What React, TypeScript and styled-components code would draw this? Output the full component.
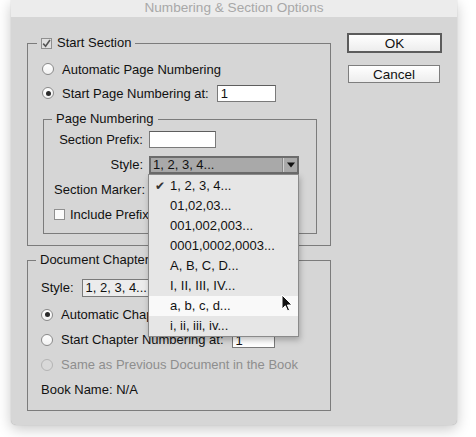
import styled, { createGlobalStyle } from 'styled-components';

const GlobalStyle = createGlobalStyle`
  html, body {
    margin: 0;
    padding: 0;
    background: #ffffff;
  }
  body {
    font-family: "Liberation Sans", Arial, sans-serif;
    font-size: 13px;
    color: #111;
  }
`;

const Page = styled.div`
  width: 476px;
  height: 437px;
  padding-left: 11px;
  box-sizing: border-box;
  overflow: hidden;
`;

const Window = styled.div`
  width: 446px;
  height: 425px;
  background: #d6d6d6;
  border-radius: 0 0 5px 5px;
  box-shadow: 0 4px 14px rgba(0, 0, 0, 0.22), 0 0 1px rgba(0, 0, 0, 0.3);
  display: flex;
  flex-direction: column;
`;

const TitleBar = styled.div`
  height: 17px;
  line-height: 15px;
  background: #ececec;
  color: #a8a8a8;
  text-align: center;
  font-size: 13.6px;
`;

const Content = styled.div`
  display: flex;
  gap: 16px;
  padding: 16px 0 0 16px;
`;

const LeftColumn = styled.div`
  width: 304px;
  padding-top: 2px;
  display: flex;
  flex-direction: column;
  gap: 6px;
`;

const RightColumn = styled.div`
  display: flex;
  flex-direction: column;
  align-items: flex-start;
  gap: 12px;
`;

const Group = styled.fieldset<{ $pad: string }>`
  margin: 0;
  min-width: 0;
  border: 1px solid #7c7c7c;
  padding: ${({ $pad }) => $pad};
  display: flex;
  flex-direction: column;
`;

const Legend = styled.legend<{ $shift: number }>`
  display: flex;
  align-items: center;
  gap: 5px;
  height: 16px;
  padding: 0 4px;
  margin-left: ${({ $shift }) => $shift}px;
  line-height: 16px;
`;

const InnerGroup = styled(Group)`
  margin: 6px 0 0 1px;
`;

const Row = styled.div<{ $h?: number }>`
  display: flex;
  align-items: center;
  gap: 8px;
  height: ${({ $h }) => $h ?? 24}px;
  white-space: nowrap;
`;

const FormRow = styled.div`
  display: grid;
  grid-template-columns: 89px auto;
  column-gap: 6px;
  align-items: center;
  height: 25px;
  white-space: nowrap;
`;

const FieldLabel = styled.span`
  text-align: right;
`;

const Radio = styled.span<{ $on?: boolean; $disabled?: boolean }>`
  width: 12px;
  height: 12px;
  box-sizing: border-box;
  border-radius: 50%;
  border: 1px solid ${({ $disabled }) => ($disabled ? '#b4b4b4' : '#8a8a8a')};
  background: ${({ $disabled }) =>
    $disabled ? '#d9d9d9' : 'linear-gradient(#ffffff, #f1f1f1)'};
  display: inline-flex;
  align-items: center;
  justify-content: center;
  flex: none;
  &::after {
    content: '';
    width: 5px;
    height: 5px;
    border-radius: 50%;
    background: #2b2b2b;
    display: ${({ $on }) => ($on ? 'block' : 'none')};
  }
`;

const Check = styled.span<{ $on?: boolean }>`
  width: 11px;
  height: 11px;
  box-sizing: border-box;
  border: 1px solid #8f8f8f;
  background: ${({ $on }) => ($on ? '#e0e0e0' : '#fbfbfb')};
  display: inline-flex;
  align-items: center;
  justify-content: center;
  flex: none;
`;

const RadioText = styled.span<{ $disabled?: boolean }>`
  color: ${({ $disabled }) => ($disabled ? '#8e8e8e' : '#111')};
`;

const CheckText = styled.span`
  margin-left: -3px;
`;

const TextBox = styled.span<{ $w: number; $h?: number }>`
  display: inline-block;
  width: ${({ $w }) => $w}px;
  height: ${({ $h }) => $h ?? 17}px;
  box-sizing: border-box;
  background: #ffffff;
  border: 1px solid #7a7a7a;
  border-top-color: #5e5e5e;
  padding-left: 3px;
  line-height: 16px;
  font-size: 13px;
`;

const SelectWrap = styled.div`
  position: relative;
  width: 150px;
`;

const Select = styled.div<{ $open?: boolean; $w?: number }>`
  width: ${({ $w }) => $w ?? 150}px;
  height: 18px;
  box-sizing: border-box;
  border: ${({ $open }) => ($open ? '2px solid #6c6c6c' : '1px solid #7a7a7a')};
  background: ${({ $open }) => ($open ? '#a9a9a9' : '#ececec')};
  display: flex;
  align-items: center;
  padding-left: ${({ $open }) => ($open ? '2px' : '3px')};
  line-height: 14px;
`;

const SelectValue = styled.span`
  flex: 1;
`;

const ArrowPart = styled.span`
  width: 13px;
  height: 14px;
  border-left: 1px solid #d2d2d2;
  box-shadow: -1px 0 0 #8a8a8a;
  display: flex;
  align-items: center;
  justify-content: center;
`;

const Menu = styled.div`
  position: absolute;
  top: 18px;
  left: -1px;
  width: 151px;
  box-sizing: border-box;
  padding-top: 1px;
  background: #e6e6e6;
  border: 1px solid #8a8a8a;
  box-shadow: 1px 3px 6px rgba(0, 0, 0, 0.25);
  z-index: 5;
`;

const MenuItem = styled.div<{ $hover?: boolean }>`
  position: relative;
  height: 20px;
  line-height: 20px;
  padding-left: 21px;
  background: ${({ $hover }) => ($hover ? '#f9f9f9' : 'transparent')};
`;

const Tick = styled.span`
  position: absolute;
  left: 6px;
  top: 0;
  font-size: 12px;
  color: #333;
`;

const Cursor = styled.svg`
  position: absolute;
  left: 132px;
  top: 119px;
`;

const Button = styled.button<{ $default?: boolean }>`
  font-family: "Liberation Sans", Arial, sans-serif;
  font-size: 13.5px;
  color: #111;
  padding: 0;
  width: ${({ $default }) => ($default ? 95 : 92)}px;
  height: ${({ $default }) => ($default ? 20 : 18)}px;
  margin-left: ${({ $default }) => ($default ? 0 : 1)}px;
  box-sizing: border-box;
  border: ${({ $default }) => ($default ? '2px solid #5c5c5c' : '1px solid #7e7e7e')};
  background: linear-gradient(#ffffff, #ededed);
  border-radius: 0;
`;

const pageStyles = [
  '1, 2, 3, 4...',
  '01,02,03...',
  '001,002,003...',
  '0001,0002,0003...',
  'A, B, C, D...',
  'I, II, III, IV...',
  'a, b, c, d...',
  'i, ii, iii, iv...',
];

const CheckMark = () => (
  <svg width="9" height="9" viewBox="0 0 9 9">
    <path d="M1.2 4.6 L3.6 7.2 L8 1" fill="none" stroke="#555" strokeWidth="1.6" />
  </svg>
);

const DownArrow = () => (
  <svg width="8" height="6" viewBox="0 0 8 6">
    <path d="M0 0.5 H8 L4 5.5 Z" fill="#111" />
  </svg>
);

const App = () => {
  return (
    <>
      <GlobalStyle />
      <Page>
        <Window>
          <TitleBar>Numbering &amp; Section Options</TitleBar>
          <Content>
            <LeftColumn>
              <Group $pad="6px 13px 11px 14px">
                <Legend $shift={-5}>
                  <Check $on>
                    <CheckMark />
                  </Check>
                  <span>Start Section</span>
                </Legend>
                <Row>
                  <Radio />
                  <RadioText>Automatic Page Numbering</RadioText>
                </Row>
                <Row>
                  <Radio $on />
                  <RadioText>Start Page Numbering at:</RadioText>
                  <TextBox $w={59}>1</TextBox>
                </Row>
                <InnerGroup $pad="0 10px 6px 10px">
                  <Legend $shift={-2}>
                    <span>Page Numbering</span>
                  </Legend>
                  <FormRow>
                    <FieldLabel>Section Prefix:</FieldLabel>
                    <TextBox $w={67} />
                  </FormRow>
                  <FormRow>
                    <FieldLabel>Style:</FieldLabel>
                    <SelectWrap>
                      <Select $open>
                        <SelectValue>1, 2, 3, 4...</SelectValue>
                        <ArrowPart>
                          <DownArrow />
                        </ArrowPart>
                      </Select>
                      <Menu>
                        {pageStyles.map((label, i) => (
                          <MenuItem key={label} $hover={i === 6}>
                            {i === 0 && <Tick>✔</Tick>}
                            {label}
                          </MenuItem>
                        ))}
                        <Cursor width="12" height="19" viewBox="0 0 12 19">
                          <path
                            d="M1 1 L1 15 L4.3 11.8 L6.6 17 L8.6 16.1 L6.4 11 L11 11 Z"
                            fill="#111"
                            stroke="#fff"
                            strokeWidth="1"
                          />
                        </Cursor>
                      </Menu>
                    </SelectWrap>
                  </FormRow>
                  <FormRow>
                    <FieldLabel>Section Marker:</FieldLabel>
                    <TextBox $w={150} />
                  </FormRow>
                  <Row $h={25}>
                    <Check />
                    <CheckText>Include Prefix when Numbering Pages</CheckText>
                  </Row>
                </InnerGroup>
              </Group>

              <Group $pad="5px 13px 8px 13px">
                <Legend $shift={-5}>
                  <span>Document Chapter Numbering</span>
                </Legend>
                <Row $h={29}>
                  <span>Style:</span>
                  <Select $w={150}>
                    <SelectValue>1, 2, 3, 4...</SelectValue>
                  </Select>
                </Row>
                <Row $h={25}>
                  <Radio $on />
                  <RadioText>Automatic Chapter Numbering</RadioText>
                </Row>
                <Row $h={25}>
                  <Radio />
                  <RadioText>Start Chapter Numbering at:</RadioText>
                  <TextBox $w={43} $h={16}>1</TextBox>
                </Row>
                <Row $h={25}>
                  <Radio $disabled />
                  <RadioText $disabled>Same as Previous Document in the Book</RadioText>
                </Row>
                <Row $h={25}>
                  <span>Book Name: N/A</span>
                </Row>
              </Group>
            </LeftColumn>

            <RightColumn>
              <Button $default>OK</Button>
              <Button>Cancel</Button>
            </RightColumn>
          </Content>
        </Window>
      </Page>
    </>
  );
};

export default App;
